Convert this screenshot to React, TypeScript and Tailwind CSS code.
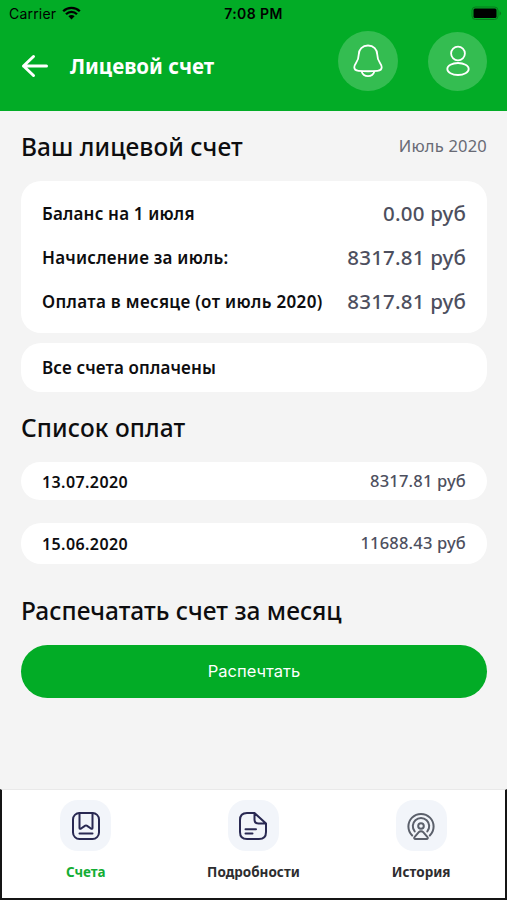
import type { ReactNode } from "react";

const balance = [
  { label: "Баланс на 1 июля", value: "0.00 руб", tracking: "tracking-[0.17px]" },
  { label: "Начисление за июль:", value: "8317.81 руб", tracking: "tracking-[0.22px]" },
  { label: "Оплата в месяце (от июль 2020)", value: "8317.81 руб", tracking: "tracking-[0.33px]" },
];

function StatusBar() {
  return (
    <div className="grid h-7 grid-cols-3 items-center pl-[9px] pr-[5px] font-['Inter',sans-serif] text-black">
      <div className="flex items-center gap-[6px]">
        <span className="text-[14px] leading-5 tracking-[0.2px]">Carrier</span>
        <svg className="-mt-[2px]" width="19" height="14" viewBox="0 0 19 14" fill="none" stroke="currentColor" strokeWidth="2.3">
          <path d="M1.2 5.2a11.8 11.8 0 0 1 16.6 0" />
          <path d="M4 8.2a7.8 7.8 0 0 1 11 0" />
          <path d="M9.5 13.4 6.4 10.3a4.4 4.4 0 0 1 6.2 0z" fill="currentColor" stroke="none" />
        </svg>
      </div>
      <span className="-ml-1 text-center text-[14px] leading-5 font-semibold tracking-[0.4px]">7:08 PM</span>
      <svg className="-mt-[2px] justify-self-end" width="31" height="15" viewBox="0 0 31 15">
        <rect x="1" y="1" width="26" height="12.5" rx="3.5" fill="none" stroke="#087a1d" strokeWidth="1" />
        <rect x="2.5" y="2.5" width="23" height="9.5" rx="1.5" fill="#000" />
        <path d="M28.6 5.2c2 .8 2 3.4 0 4.2z" fill="#087a1d" />
      </svg>
    </div>
  );
}

function Header() {
  return (
    <header className="h-[111px] bg-[#02ac26]">
      <StatusBar />
      <div className="flex h-[66px] items-center pl-[21px] pr-5 text-white">
        <svg className="mt-[10px]" width="28" height="24" viewBox="0 0 28 24" fill="none" stroke="currentColor" strokeWidth="3" strokeLinecap="round" strokeLinejoin="round">
          <path d="M12.5 2.5 2.5 12l10 9.5M2.5 12h23" />
        </svg>
        <h1 className="ml-[21px] mt-[10px] font-['Noto_Sans',sans-serif] text-[20.5px] font-bold">Лицевой счет</h1>
        <button className="ml-auto flex size-[60px] items-center justify-center rounded-full bg-[#34bd51]">
          <svg width="30" height="34" viewBox="0 0 30 34" fill="none" stroke="currentColor" strokeWidth="1.8" strokeLinejoin="round">
            <path d="M15 1.5c-5.500 0-9.300 4-9.300 9.200 0 7.400-4.400 8.600-4.400 12.600 0 2.200 1.300 3.300 4.200 3.500 6 .6 13 .6 19 0 2.900-.2 4.200-1.300 4.200-3.500 0-4-4.400-5.200-4.400-12.600 0-5.200-3.800-9.200-9.300-9.200Z" />
            <path d="M8.500 27.200c1.200 3.600 3.700 5 6.500 5s5.300-1.400 6.500-5" />
          </svg>
        </button>
        <button className="ml-[30px] flex size-[59px] items-center justify-center rounded-full bg-[#34bd51]">
          <svg width="24" height="32" viewBox="0 0 24 32" fill="none" stroke="currentColor" strokeWidth="1.8">
            <circle cx="12" cy="8.5" r="6.9" />
            <ellipse cx="12" cy="24" rx="10.7" ry="6" />
          </svg>
        </button>
      </div>
    </header>
  );
}

function Tab({ label, className, children }: { label: string; className: string; children: ReactNode }) {
  return (
    <button className="flex flex-col items-center pt-[10px]">
      <span className="flex size-[51px] items-center justify-center rounded-[18px] bg-[#f2f5fa]">{children}</span>
      <span className={`mt-[11px] font-['Noto_Sans',sans-serif] text-[13.5px] leading-5 font-bold ${className}`}>{label}</span>
    </button>
  );
}

function TabBar() {
  return (
    <nav className="grid h-[111px] grid-cols-3 border-2 border-t-[1px] border-[#151515] border-t-[#e9e9e9] bg-white">
      <Tab label="Счета" className="text-[#13ad34]">
        <svg width="28" height="28" viewBox="0 0 28 28" fill="none" stroke="#292952" strokeWidth="2" strokeLinecap="round" strokeLinejoin="round">
          <rect x="1" y="1" width="26" height="26" rx="6.5" />
          <path d="M7.5 1v15c0 .9.9 1.1 1.6.5l3.4-2.4a2.3 2.3 0 0 1 3 0l3.4 2.4c.7.6 1.600.4 1.600-.5V1M7.500 21.500h13" />
        </svg>
      </Tab>
      <Tab label="Подробности" className="text-[#2d2d2f]">
        <svg width="28" height="28" viewBox="0 0 28 28" fill="none" stroke="#292952" strokeWidth="2" strokeLinecap="round" strokeLinejoin="round">
          <path d="M15.5 1H8C3.5 1 1 3.5 1 8v12c0 4.5 2.5 7 7 7h12c4.5 0 7-2.5 7-7v-8.5L15.5 1v6.5c0 3 1 4 4 4H27M6.5 17.3H17M6.5 21.5h7" />
        </svg>
      </Tab>
      <Tab label="История" className="text-[#2d2d2f]">
        <svg width="28" height="28" viewBox="0 0 28 28" fill="none" stroke="#5b606b" strokeWidth="2" strokeLinecap="round" strokeLinejoin="round">
          <path d="M5.2 23.5a12.6 12.6 0 1 1 17.6 0" />
          <path d="M7.7 19.4a8.2 8.2 0 1 1 12.6 0" />
          <circle cx="14" cy="14" r="2.8" />
          <path d="m11.8 20.2-4.1 4.6c-1 1.1-.5 2.2.9 2.2h10.8c1.4 0 1.9-1.1.9-2.2l-4.1-4.6a2.9 2.9 0 0 0-4.4 0Z" />
        </svg>
      </Tab>
    </nav>
  );
}

export default function App() {
  return (
    <div className="flex h-[900px] w-[507px] flex-col overflow-hidden bg-[#f4f4f4] font-['Noto_Sans',sans-serif] text-[#0d0d0f]">
      <Header />
      <main className="flex-1 pr-5 pl-[21px] whitespace-nowrap">
        <div className="flex h-[70px] items-center justify-between">
          <h2 className="pt-[2px] text-[24.5px] font-medium tracking-[0.05px]">Ваш лицевой счет</h2>
          <span className="text-[16.5px] tracking-[0.2px] text-[#686a75]">Июль 2020</span>
        </div>

        <section className="h-[152px] rounded-[20px] bg-white px-[21px] pt-[10px]">
          {balance.map((row) => (
            <div key={row.label} className="flex h-11 items-center justify-between">
              <span className={`pt-px text-[17px] font-semibold ${row.tracking}`}>{row.label}</span>
              <span className="text-[20.5px] font-medium tracking-[0.2px] text-[#4d4f5e]">{row.value}</span>
            </div>
          ))}
        </section>

        <section className="mt-[10px] flex h-[49px] items-center rounded-[20px] bg-white px-[21px]">
          <span className="pt-px text-[17px] font-semibold tracking-[0.13px]">Все счета оплачены</span>
        </section>

        <h2 className="mt-[19px] text-[24.5px] leading-[34px] font-medium tracking-[0.1px]">Список оплат</h2>
        <div className="mt-[17px] flex h-[38px] items-center justify-between rounded-[20px] bg-white px-[21px]">
          <span className="pt-px text-[16px] font-semibold tracking-[0.4px]">13.07.2020</span>
          <span className="text-[16.5px] font-medium tracking-[0.2px] text-[#4d4f5e]">8317.81 руб</span>
        </div>
        <div className="mt-[23px] flex h-[41px] items-center justify-between rounded-[20px] bg-white px-[21px]">
          <span className="text-[16px] font-semibold tracking-[0.4px]">15.06.2020</span>
          <span className="text-[16.5px] font-medium tracking-[0.2px] text-[#4d4f5e]">11688.43 руб</span>
        </div>

        <h2 className="mt-[30px] text-[24.5px] leading-[34px] font-medium">Распечатать счет за месяц</h2>
        <button className="mt-[17px] flex h-[53px] w-full items-center justify-center rounded-full bg-[#02ac26] font-['Inter',sans-serif] text-[16.5px] text-white">
          Распечтать
        </button>
      </main>
      <TabBar />
    </div>
  );
}
